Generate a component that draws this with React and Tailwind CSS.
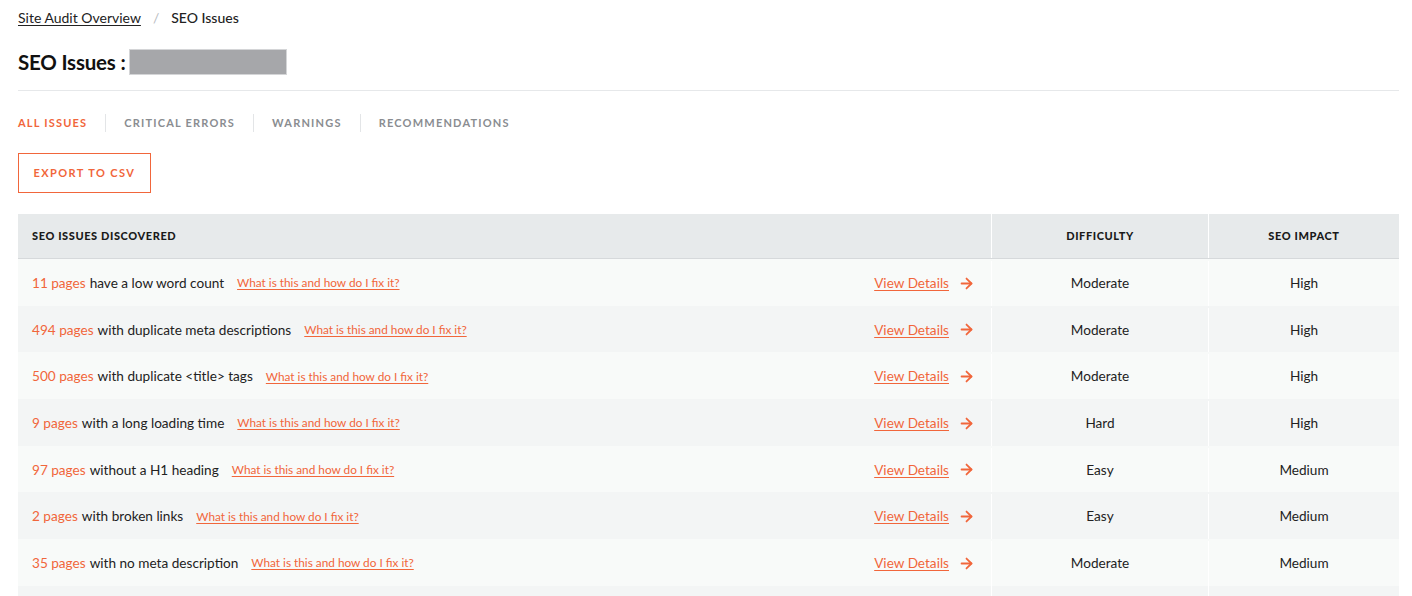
import { ArrowRight } from "lucide-react";

const issues = [
  { count: "11 pages", text: "have a low word count", difficulty: "Moderate", impact: "High" },
  { count: "494 pages", text: "with duplicate meta descriptions", difficulty: "Moderate", impact: "High" },
  { count: "500 pages", text: "with duplicate <title> tags", difficulty: "Moderate", impact: "High" },
  { count: "9 pages", text: "with a long loading time", difficulty: "Hard", impact: "High" },
  { count: "97 pages", text: "without a H1 heading", difficulty: "Easy", impact: "Medium" },
  { count: "2 pages", text: "with broken links", difficulty: "Easy", impact: "Medium" },
  { count: "35 pages", text: "with no meta description", difficulty: "Moderate", impact: "Medium" },
];

const tabs = ["ALL ISSUES", "CRITICAL ERRORS", "WARNINGS", "RECOMMENDATIONS"];

export default function App() {
  return (
    <div className="h-[596px] overflow-hidden bg-white pl-[18px] pr-[13px] pt-[8px] text-[#222] font-['Lato','Open_Sans',sans-serif]">
      {/* breadcrumb */}
      <div className="flex items-center text-[14px] h-[18px]">
        <span className="underline underline-offset-2">Site Audit Overview</span>
        <span className="mx-[12px] text-[#b9bcbf]">/</span>
        <span className="font-medium">SEO Issues</span>
      </div>

      {/* title */}
      <div className="flex items-center mt-[23px] h-[26px]">
        <h1 className="text-[20.5px] font-bold text-[#111] tracking-[-0.2px]">SEO Issues :</h1>
        <div className="ml-[4px] w-[158px] h-[26px] bg-[#a6a7aa] border border-[#d4d5d7]"></div>
      </div>

      <div className="mt-[15px] border-t border-[#e6e8ea]"></div>

      {/* tabs */}
      <div className="flex items-center mt-[23px] h-[18px]">
        {tabs.map((t, i) => (
          <div key={t} className="flex items-center">
            {i > 0 && <div className="w-px h-[18px] bg-[#e3e5e7] mx-[18px]"></div>}
            <span className={"text-[11px] font-bold tracking-[1.2px] " + (i === 0 ? "text-[#f1663b]" : "text-[#8a8d91]")}>{t}</span>
          </div>
        ))}
      </div>

      {/* export */}
      <button className="mt-[21px] w-[133px] h-[40px] border border-[#f1663b] text-[#f1663b] text-[11px] font-bold tracking-[1.4px] flex items-center justify-center">
        EXPORT TO CSV
      </button>

      {/* table */}
      <div className="mt-[21px]">
        <div className="flex h-[45px] bg-[#e7eaeb] border-b border-[#d6d9db] text-[11px] font-black tracking-[0.6px] text-[#1a1a1a]">
          <div className="w-[974px] flex items-center pl-[14px] border-r border-white">SEO ISSUES DISCOVERED</div>
          <div className="w-[217px] flex items-center justify-center border-r border-white">DIFFICULTY</div>
          <div className="flex-1 flex items-center justify-center">SEO IMPACT</div>
        </div>
        {issues.map((r, i) => (
          <div key={i} className={"flex h-[46.67px] pt-[2px] text-[13.6px] " + (i % 2 === 0 ? "bg-[#f8faf9]" : "bg-[#f3f5f5]")}>
            <div className="w-[974px] flex items-center pl-[14px] pr-[16px] border-r border-white">
              <span className="text-[#f1663b]">{r.count}</span>
              <span className="ml-[4px]">{r.text}</span>
              <a className="ml-[13px] text-[11.8px] text-[#f1663b] underline underline-offset-2">What is this and how do I fix it?</a>
              <a className="ml-auto text-[#f1663b] underline underline-offset-2">View Details</a>
              <ArrowRight className="ml-[9px] text-[#f1663b]" size={17} strokeWidth={2.5} />
            </div>
            <div className="w-[217px] flex items-center justify-center border-r border-white">{r.difficulty}</div>
            <div className="flex-1 flex items-center justify-center">{r.impact}</div>
          </div>
        ))}
        <div className="flex h-[46.67px] bg-[#f3f5f5]">
          <div className="w-[974px] border-r border-white"></div>
          <div className="w-[217px] border-r border-white"></div>
          <div className="flex-1"></div>
        </div>
      </div>
    </div>
  );
}
